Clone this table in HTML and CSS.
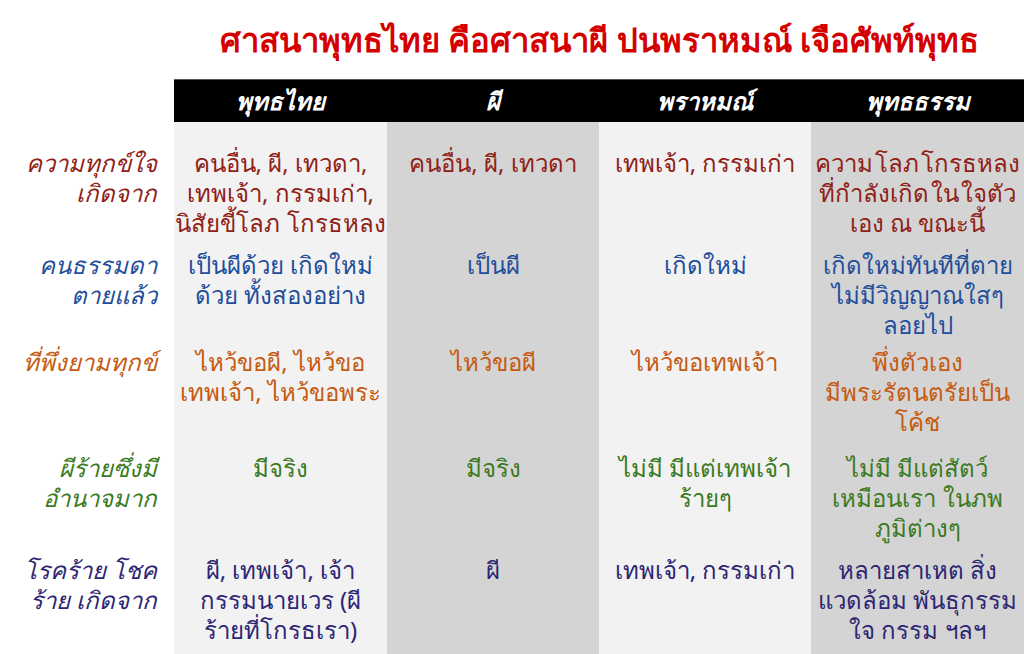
FILE: index.html
```html
<!DOCTYPE html>
<html lang="th">
<head>
<meta charset="utf-8">
<link rel="stylesheet" href="styles.css">
</head>
<body>
<h1 class="title">ศาสนาพุทธไทย คือศาสนาผี ปนพราหมณ์ เจือศัพท์พุทธ</h1>
<div class="table">
  <div class="corner"></div>
  <div class="head">พุทธไทย</div>
  <div class="head">ผี</div>
  <div class="head">พราหมณ์</div>
  <div class="head">พุทธธรรม</div>

  <div class="label r1 first">ความทุกข์ใจ<br>เกิดจาก</div>
  <div class="cell light r1 first">คนอื่น, ผี, เทวดา,<br>เทพเจ้า, กรรมเก่า,<br>นิสัยขี้โลภ โกรธหลง</div>
  <div class="cell dark r1 first">คนอื่น, ผี, เทวดา</div>
  <div class="cell light r1 first">เทพเจ้า, กรรมเก่า</div>
  <div class="cell dark r1 first"><span class="tight">ความ โลภ โกรธหลง<br>ที่กำลังเกิด ใน ใจตัว</span><br>เอง ณ ขณะนี้</div>

  <div class="label r2">คนธรรมดา<br>ตายแล้ว</div>
  <div class="cell light r2">เป็นผีด้วย เกิดใหม่<br>ด้วย ทั้งสองอย่าง</div>
  <div class="cell dark r2">เป็นผี</div>
  <div class="cell light r2">เกิดใหม่</div>
  <div class="cell dark r2">เกิดใหม่ทันทีที่ตาย<br>ไม่มีวิญญาณใสๆ<br>ลอยไป</div>

  <div class="label r3">ที่พึ่งยามทุกข์</div>
  <div class="cell light r3">ไหว้ขอผี, ไหว้ขอ<br>เทพเจ้า, ไหว้ขอพระ</div>
  <div class="cell dark r3">ไหว้ขอผี</div>
  <div class="cell light r3">ไหว้ขอเทพเจ้า</div>
  <div class="cell dark r3">พึ่งตัวเอง<br>มีพระรัตนตรัยเป็น<br>โค้ช</div>

  <div class="label r4">ผีร้ายซึ่งมี<br>อำนาจมาก</div>
  <div class="cell light r4">มีจริง</div>
  <div class="cell dark r4">มีจริง</div>
  <div class="cell light r4">ไม่มี มีแต่เทพเจ้า<br>ร้ายๆ</div>
  <div class="cell dark r4">ไม่มี มีแต่สัตว์<br>เหมือนเรา ในภพ<br>ภูมิต่างๆ</div>

  <div class="label r5">โรคร้าย โชค<br>ร้าย เกิดจาก</div>
  <div class="cell light r5">ผี, เทพเจ้า, เจ้า<br>กรรมนายเวร (ผี<br>ร้ายที่โกรธเรา)</div>
  <div class="cell dark r5">ผี</div>
  <div class="cell light r5">เทพเจ้า, กรรมเก่า</div>
  <div class="cell dark r5">หลายสาเหต สิ่ง<br>แวดล้อม พันธุกรรม<br>ใจ กรรม ฯลฯ</div>
</div>
</body>
</html>
```
FILE: styles.css
```css
html, body {
  margin: 0;
  padding: 0;
  background: #ffffff;
  width: 1024px;
  height: 654px;
  overflow: hidden;
}
body {
  font-family: "Noto Sans", "DejaVu Sans", sans-serif;
}
.title {
  margin: 0;
  height: 79px;
  box-sizing: border-box;
  padding: 18px 0 0 175px;
  text-align: center;
  color: #d40000;
  font-size: 32.8px;
  font-weight: bold;
  line-height: 44px;
  white-space: nowrap;
}
.table {
  display: grid;
  grid-template-columns: 174px 213px 212px 212px 213px;
  grid-template-rows: 43px 120px 97px 106px 102px 1fr;
  height: 575px;
}
.corner { background: #fff; }
.head {
  background: #000;
  border-top: 1px solid #555;
  color: #fff;
  font-style: italic;
  font-weight: bold;
  font-size: 24px;
  display: flex;
  align-items: center;
  justify-content: center;
}
.label {
  text-align: right;
  font-style: italic;
  font-size: 24px;
  line-height: 30px;
  padding: 8px 17px 0 0;
  white-space: nowrap;
}
.cell {
  text-align: center;
  font-size: 24px;
  line-height: 30px;
  padding: 8px 0 0;
  white-space: nowrap;
}
.tight { word-spacing: -4px; }
.label.first, .cell.first { padding-top: 26px; }
.light { background: #f2f2f2; }
.dark { background: #d4d4d4; }
.r1 { color: #8f2116; }
.r2 { color: #1f4e9b; }
.r3 { color: #c55a11; }
.r4 { color: #3b7a22; }
.r5 { color: #2d2672; }
```
